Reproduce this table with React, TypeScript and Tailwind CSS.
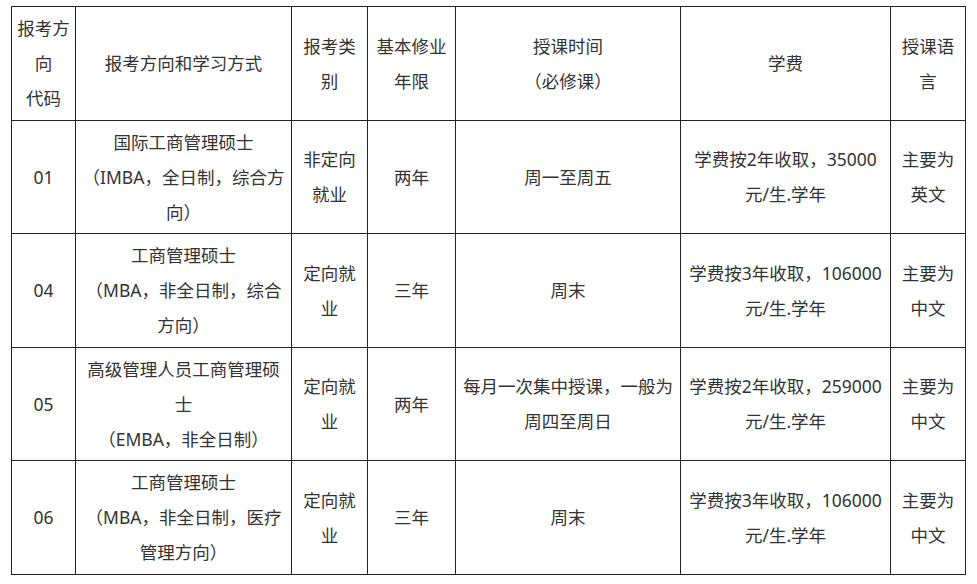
import React from "react";

type Cell = string[];

const widths = [64, 216, 76, 88, 225, 210, 75];

const header: Cell[] = [
  ["报考方", "向", "代码"],
  ["报考方向和学习方式"],
  ["报考类", "别"],
  ["基本修业", "年限"],
  ["授课时间", "（必修课）"],
  ["学费"],
  ["授课语", "言"],
];

const rows: { h: string; cells: Cell[] }[] = [
  {
    h: "h-[113px]",
    cells: [
      ["01"],
      ["国际工商管理硕士", "（IMBA，全日制，综合方", "向）"],
      ["非定向", "就业"],
      ["两年"],
      ["周一至周五"],
      ["学费按2年收取，35000", "元/生.学年"],
      ["主要为", "英文"],
    ],
  },
  {
    h: "h-[114px]",
    cells: [
      ["04"],
      ["工商管理硕士", "（MBA，非全日制，综合", "方向）"],
      ["定向就", "业"],
      ["三年"],
      ["周末"],
      ["学费按3年收取，106000", "元/生.学年"],
      ["主要为", "中文"],
    ],
  },
  {
    h: "h-[113px]",
    cells: [
      ["05"],
      ["高级管理人员工商管理硕", "士", "（EMBA，非全日制）"],
      ["定向就", "业"],
      ["两年"],
      ["每月一次集中授课，一般为", "周四至周日"],
      ["学费按2年收取，259000", "元/生.学年"],
      ["主要为", "中文"],
    ],
  },
  {
    h: "h-[114px]",
    cells: [
      ["06"],
      ["工商管理硕士", "（MBA，非全日制，医疗", "管理方向）"],
      ["定向就", "业"],
      ["三年"],
      ["周末"],
      ["学费按3年收取，106000", "元/生.学年"],
      ["主要为", "中文"],
    ],
  },
];

function CellContent({ lines }: { lines: string[] }) {
  return (
    <>
      {lines.map((l, i) => (
        <span key={i} className="block whitespace-nowrap">
          {l}
        </span>
      ))}
    </>
  );
}

export default function App() {
  return (
    <div
      className="min-h-[584px] w-[977px] bg-white pt-[6px] pl-[11px] text-[#333333]"
      style={{ fontFamily: '"Noto Sans", "Noto Sans CJK SC", sans-serif' }}
    >
      <table className="table-fixed border-collapse w-[954px] text-[17.5px] leading-[35px]">
        <colgroup>
          {widths.map((w, i) => (
            <col key={i} style={{ width: w }} />
          ))}
        </colgroup>
        <tbody>
          <tr className="h-[114px]">
            {header.map((c, i) => (
              <td
                key={i}
                className="border border-[#222222] px-0 py-0 text-center align-middle"
              >
                <CellContent lines={c} />
              </td>
            ))}
          </tr>
          {rows.map((r, ri) => (
            <tr key={ri} className={r.h}>
              {r.cells.map((c, i) => (
                <td
                  key={i}
                  className="border border-[#222222] px-0 py-0 text-center align-middle"
                >
                  <CellContent lines={c} />
                </td>
              ))}
            </tr>
          ))}
        </tbody>
      </table>
    </div>
  );
}
